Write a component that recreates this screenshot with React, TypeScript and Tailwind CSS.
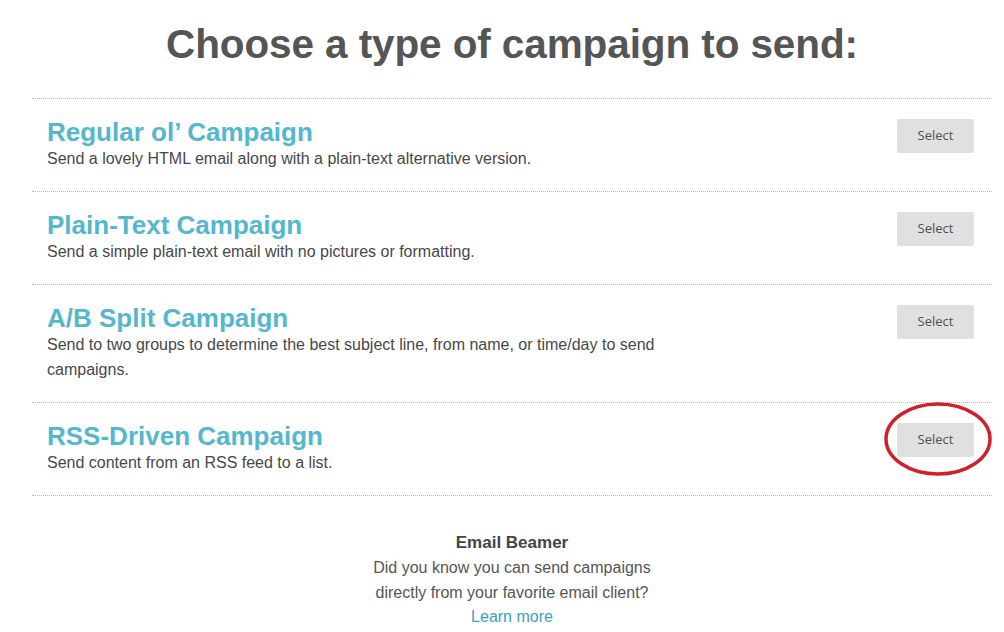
import React from "react";

const rows = [
  { title: "Regular ol\u2019 Campaign", desc: "Send a lovely HTML email along with a plain-text alternative version." },
  { title: "Plain-Text Campaign", desc: "Send a simple plain-text email with no pictures or formatting." },
  { title: "A/B Split Campaign", desc: "Send to two groups to determine the best subject line, from name, or time/day to send campaigns." },
  { title: "RSS-Driven Campaign", desc: "Send content from an RSS feed to a list.", circled: true },
];

export default function App() {
  return (
    <div className="w-[1004px] h-[632px] bg-white overflow-hidden" style={{ fontFamily: '"Liberation Sans", Arial, sans-serif' }}>
      <div className="ml-[32px] w-[960px]">
        <h1 className="text-center font-bold text-[40.5px] leading-[46px] text-[#555555] pt-[21px] pb-[31px] tracking-[-0.1px]">
          Choose a type of campaign to send:
        </h1>
        <div className="border-t border-dotted border-[#b8b8b8]">
          {rows.map((r) => (
            <div key={r.title} className="flex items-start justify-between border-b border-dotted border-[#b8b8b8] pl-[15px] pr-[18px] pt-[17px] pb-[20px]">
              <div className="max-w-[625px]">
                <div className="text-[26px] leading-[32px] font-bold text-[#55b7cd]">{r.title}</div>
                <div className="text-[16px] leading-[25px] text-[#484848] mt-[-2px]">{r.desc}</div>
              </div>
              <div className="relative mt-[3px]">
                <button
                  className="w-[77px] h-[34px] bg-[#e0e0e0] rounded-[2px] text-[13px] font-medium text-[#505050]"
                  style={{ fontFamily: '"Open Sans", "DejaVu Sans", sans-serif' }}
                >
                  Select
                </button>
                {r.circled && (
                  <svg className="absolute left-[-14px] top-[-22px] pointer-events-none" width="110" height="76" viewBox="0 0 110 76">
                    <ellipse cx="55" cy="38" rx="52" ry="35" fill="none" stroke="#d0202a" strokeWidth="3.5" />
                  </svg>
                )}
              </div>
            </div>
          ))}
        </div>
        <div className="text-center pt-[34px]">
          <div className="text-[17px] leading-[25px] font-bold text-[#444444]">Email Beamer</div>
          <div className="text-[16px] leading-[25px] text-[#555555]">
            Did you know you can send campaigns
            <br />
            directly from your favorite email client?
          </div>
          <div className="text-[16px] leading-[24px] text-[#3a9fba]">Learn more</div>
        </div>
      </div>
    </div>
  );
}
